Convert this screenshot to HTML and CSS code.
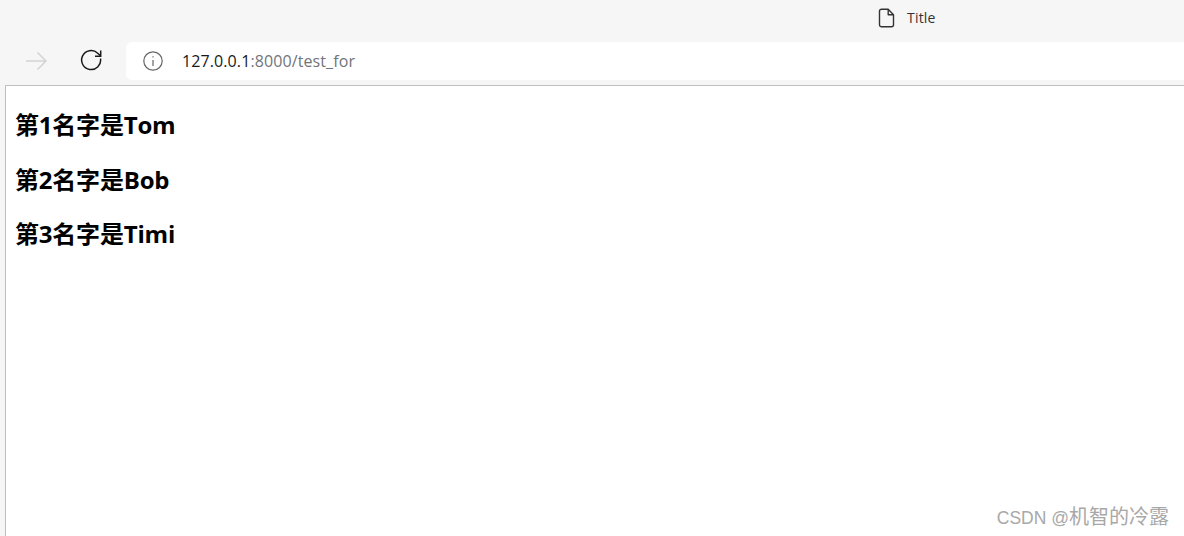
FILE: index.html
```html
<!DOCTYPE html>
<html lang="zh">
<head>
  <meta charset="UTF-8" />
  <title>Title</title>
  <link rel="stylesheet" href="styles.css">
</head>
<body>
  <div class="tabstrip">
    <div class="tab">
      <svg class="tab-icon" width="18" height="20" viewBox="0 0 18 20" fill="none" stroke="#333" stroke-width="1.4" stroke-linejoin="round">
        <path d="M3.5 1.2h6.7l5.3 5.6v10a2 2 0 0 1-2 2h-10a2 2 0 0 1-2-2v-13.600a2 2 0 0 1 2-2z"/>
        <path d="M10.200 1.200v5.600h5.300"/>
      </svg>
      <span class="tab-title">Title</span>
    </div>
  </div>
  <div class="toolbar">
    <div class="nav-btns">
      <svg class="nav-icon" width="24" height="24" viewBox="0 0 24 24" fill="none" stroke="#d4d4d4" stroke-width="1.500">
        <path d="M2 12h20M13.500 3.500l8.500 8.500-8.500 8.500"/>
      </svg>
      <svg class="nav-icon" width="24" height="24" viewBox="0 0 24 24" fill="none" stroke="#1a1a1a" stroke-width="1.500">
        <path d="M20.500 9.500a9.500 9.500 0 1 1-2.800-5.300l2.800 2.600"/>
        <path d="M20.700 1.500v5.700h-5.700"/>
      </svg>
    </div>
    <div class="urlbar">
      <svg class="info-icon" width="20" height="20" viewBox="0 0 20 20" fill="none" stroke="#666" stroke-width="1.200">
        <circle cx="10" cy="10" r="9.200"/>
        <path d="M10 9v6"/>
        <path d="M10 5.200v1.400"/>
      </svg>
      <span class="url"><span class="host">127.0.0.1</span>:8000/test_for</span>
    </div>
  </div>
  <div class="page">
    <h2>第1名字是Tom</h2>
    <h2>第2名字是Bob</h2>
    <h2>第3名字是Timi</h2>
  </div>
  <div class="watermark"><span class="wm-latin">CSDN @</span>机智的冷露</div>
</body>
</html>
```

FILE: styles.css
```css
html, body {
  height: 100%;
}
body {
  margin: 0;
  background: #f6f6f6;
  font-family: "Open Sans", "Noto Sans CJK SC", sans-serif;
  display: flex;
  flex-direction: column;
  overflow: hidden;
}
.tabstrip {
  height: 34px;
  padding-left: 878px;
  padding-top: 8px;
  flex: none;
}
.tab {
  display: flex;
  align-items: center;
  gap: 11px;
}
.tab-icon {
  display: block;
}
.tab-title {
  font-size: 14px;
  line-height: 20px;
  letter-spacing: 0.2px;
  color: #333;
}
.toolbar {
  display: flex;
  height: 38px;
  padding-bottom: 5px;
  flex: none;
}
.nav-btns {
  display: flex;
  align-items: center;
  gap: 31px;
  width: 126px;
  padding-left: 24px;
  box-sizing: border-box;
}
.nav-icon + .nav-icon {
  margin-left: 1px;
}
.urlbar {
  flex: 1;
  display: flex;
  align-items: center;
  background: #fff;
  border-radius: 6px 0 0 6px;
  padding-left: 17px;
}
.url {
  margin-left: 19px;
  font-family: "Open Sans", sans-serif;
  font-size: 16px;
  letter-spacing: 0.1px;
  color: #71757a;
}
.host {
  color: #1a1a1a;
}
.page {
  flex: 1;
  margin-left: 5px;
  background: #fff;
  border-top: 1px solid #bfbfbf;
  border-left: 1px solid #bfbfbf;
  padding: 22px 9px 0;
}
h2 {
  margin: 0 0 20.500px;
  font-size: 24px;
  line-height: 34px;
  font-weight: 700;
  letter-spacing: -0.2px;
  color: #000;
}
.watermark {
  position: absolute;
  right: 15px;
  bottom: 6px;
  font-family: "Liberation Sans", "Noto Sans CJK SC", sans-serif;
  font-size: 20px;
  color: #a8a8a8;
}
.wm-latin {
  font-size: 17.500px;
}
```
